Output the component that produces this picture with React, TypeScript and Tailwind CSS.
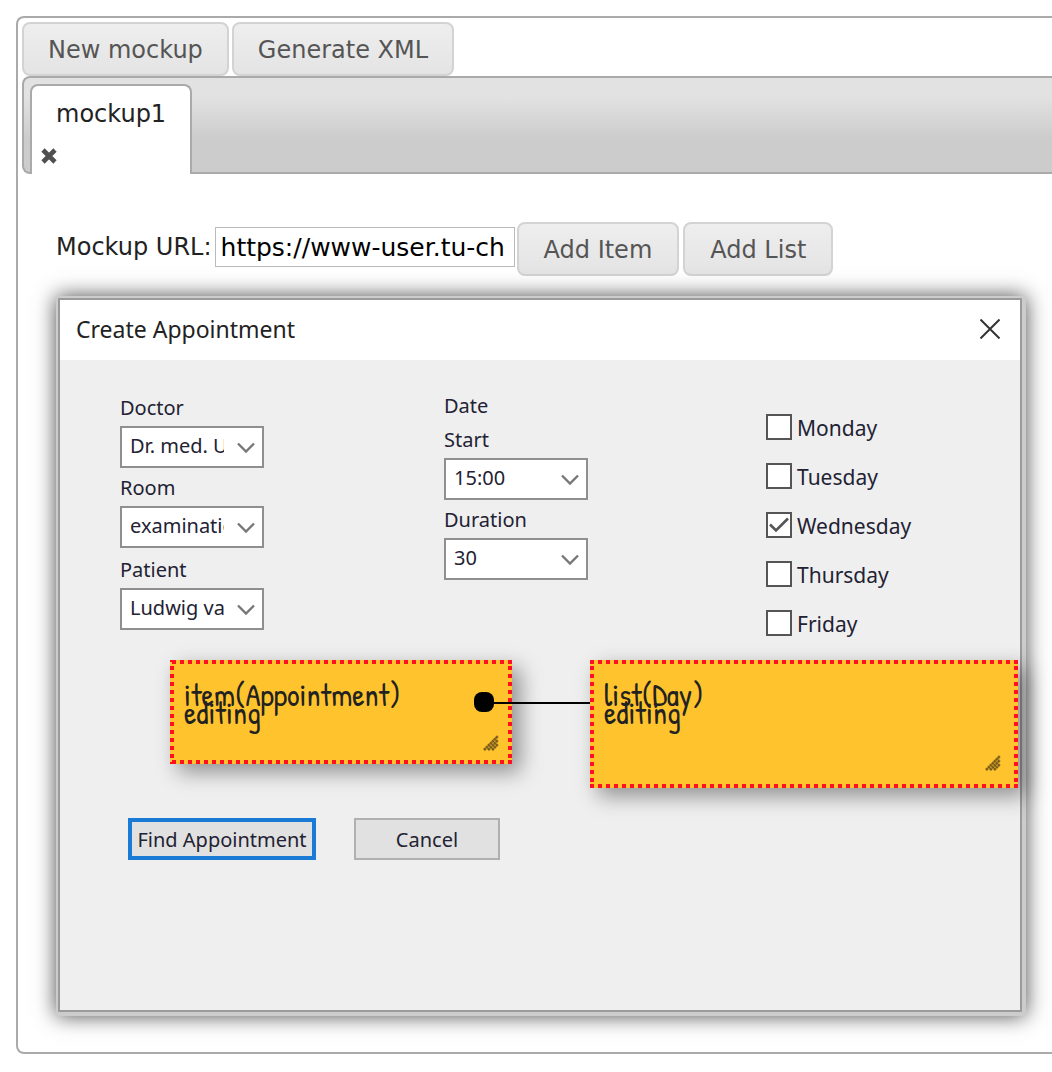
import { useState, type ReactNode } from "react";

function UiButton({ children, wide }: { children: ReactNode; wide?: boolean }) {
  return (
    <button
      type="button"
      className={`h-[54px] shrink-0 rounded-lg border-2 border-[#d3d3d3] bg-linear-to-b from-[#eeeeee] to-[#e4e4e4] pt-[2px] text-2xl text-[#555555] ${wide ? "px-[25px]" : "px-6"}`}
    >
      {children}
    </button>
  );
}

function SelectField({ id, label, options, tall }: { id: string; label: string; options: string[]; tall?: boolean }) {
  return (
    <div>
      <label htmlFor={id} className={tall ? "flex h-10 items-center pt-1" : "flex h-[38px] items-center pt-[2px]"}>
        {label}
      </label>
      <div className="relative w-36">
        <select
          id={id}
          className="block h-[42px] w-full appearance-none border-2 border-[#8f8f8f] bg-white pr-[38px] pb-[2px] pl-2"
        >
          {options.map((o) => (
            <option key={o}>{o}</option>
          ))}
        </select>
        <svg
          className="pointer-events-none absolute top-4 right-2 h-3 w-5"
          viewBox="0 0 20 12"
          fill="none"
          stroke="#777777"
          strokeWidth="2.4"
        >
          <path d="M2 1.5 10 9.5 18 1.5" />
        </svg>
      </div>
    </div>
  );
}

function DayBox({ day, initial }: { day: string; initial: boolean }) {
  const [checked, setChecked] = useState(initial);
  return (
    <label className="flex h-[26px] items-center gap-[5px] text-[21px]">
      <span className="relative size-[26px] shrink-0">
        <input
          type="checkbox"
          checked={checked}
          onChange={(e) => setChecked(e.target.checked)}
          className="block size-[26px] appearance-none border-2 border-[#555555] bg-white"
        />
        {checked && (
          <svg
            className="pointer-events-none absolute inset-0"
            viewBox="0 0 26 26"
            fill="none"
            stroke="#555555"
            strokeWidth="2.6"
          >
            <path d="M4 12.5 10 18.5 22 6.5" />
          </svg>
        )}
      </span>
      <span className="pt-[2px]">{day}</span>
    </label>
  );
}

function Grip() {
  return (
    <svg className="size-4" viewBox="0 0 16 16" stroke="#7a5c1c" strokeWidth="2.6" strokeDasharray="2.4 0.4">
      <path d="M1 15 15 1M5 15 15 5M9 15 15 9" />
    </svg>
  );
}

const noteClass =
  "absolute top-[364px] bg-[#ffc42d] p-[14px] font-['Patrick_Hand','Liberation_Sans_Narrow',Roboto,sans-serif] text-[31px] leading-[18px] text-[#222222] shadow-[8px_8px_20px_rgba(0,0,0,0.4)] [background-image:linear-gradient(270deg,#ff1020_50%,transparent_50%),linear-gradient(270deg,#ff1020_50%,transparent_50%),linear-gradient(180deg,#ff1020_50%,transparent_50%),linear-gradient(180deg,#ff1020_50%,transparent_50%)] [background-position:right_top,right_bottom,0_6px,100%_6px] [background-repeat:repeat-x,repeat-x,repeat-y,repeat-y] [background-size:8px_4px,8px_4px,4px_8px,4px_8px]";

const days = ["Monday", "Tuesday", "Wednesday", "Thursday", "Friday"];

export default function App() {
  const [url, setUrl] = useState("https://www-user.tu-ch");
  return (
    <div className="overflow-x-hidden bg-white pt-4 pb-[18px] pl-4 font-['DejaVu_Sans',Verdana,sans-serif] text-2xl text-[#222222]">
      <main className="rounded-l-lg border-2 border-r-0 border-[#aaaaaa] pt-1 pb-9 pl-1">
        <div className="flex gap-[3px]">
          <UiButton>New mockup</UiButton>
          <UiButton>Generate XML</UiButton>
        </div>

        <div className="flex h-[98px] rounded-l-lg border-2 border-r-0 border-[#aaaaaa] bg-linear-to-b from-[#e2e2e2] from-20% via-[#cccccc] via-65% to-[#cccccc] pt-[6px] pl-[6px]">
          <div className="-mb-[2px] flex w-[162px] flex-col items-start rounded-t-lg border-2 border-b-0 border-[#aaaaaa] bg-white">
            <a href="#mockup1" className="px-6 pt-3 leading-8">
              mockup1
            </a>
            <button type="button" aria-label="Remove tab" className="mt-[18px] ml-[9px]">
              <svg className="size-4" viewBox="0 0 16 16" stroke="#505050" strokeWidth="4.6">
                <path d="M2 2 14 14M14 2 2 14" />
              </svg>
            </button>
          </div>
        </div>

        <section id="mockup1" className="pt-12 pr-[26px] pl-[34px]">
          <div className="flex items-center">
            <label htmlFor="url" className="mr-[3px] shrink-0 pb-1">
              Mockup URL:
            </label>
            <input
              id="url"
              type="text"
              value={url}
              onChange={(e) => setUrl(e.target.value)}
              className="mr-[2px] mb-1 h-10 w-[300px] border border-[#bbbbbb] bg-white px-[5px] text-[25px] text-black"
            />
            <div className="flex gap-1">
              <UiButton wide>Add Item</UiButton>
              <UiButton wide>Add List</UiButton>
            </div>
          </div>

          <div className="relative mt-5 max-w-[970px] bg-[#cccccc] pt-[2px] pr-1 pb-1 pl-[2px] font-['Noto_Sans','Open_Sans',sans-serif] text-xl leading-7 text-[#222233] shadow-[0_0_20px_rgba(0,0,0,0.7)]">
            <div className="border-2 border-[#9b9b9b] bg-[#efefef] pb-[150px]">
              <header className="flex h-[60px] items-center justify-between bg-white pr-5 pb-[2px] pl-4">
                <h1 className="text-[23px] text-[#222222]">Create Appointment</h1>
                <button type="button" aria-label="Close">
                  <svg className="size-5" viewBox="0 0 20 20" stroke="#333333" strokeWidth="2">
                    <path d="M0.5 0.5 19.5 19.5M19.5 0.5 0.5 19.5" />
                  </svg>
                </button>
              </header>

              <div className="grid grid-cols-[324px_322px_1fr] pt-7 pl-[60px]">
                <div>
                  <SelectField id="doctor" label="Doctor" options={["Dr. med. Ulrich"]} />
                  <SelectField id="room" label="Room" options={["examination"]} />
                  <SelectField id="patient" label="Patient" options={["Ludwig van Beethoven"]} tall />
                </div>
                <div>
                  <p className="flex h-8 items-center pt-1">Date</p>
                  <SelectField id="start" label="Start" options={["15:00"]} />
                  <SelectField id="duration" label="Duration" options={["30"]} />
                </div>
                <div className="flex flex-col gap-[23px] pt-[26px]">
                  {days.map((d) => (
                    <DayBox key={d} day={d} initial={d === "Wednesday"} />
                  ))}
                </div>
              </div>

              <div className="mt-[182px] flex gap-[38px] pl-[68px]">
                <button type="button" className="h-[42px] w-[188px] border-4 border-[#1a7bd7] bg-[#e1e1e1] pt-[2px]">
                  Find Appointment
                </button>
                <button type="button" className="h-[42px] w-[146px] border-2 border-[#b0b0b0] bg-[#e1e1e1] pt-[2px]">
                  Cancel
                </button>
              </div>
            </div>

            <div className={`${noteClass} left-[114px] h-[104px] w-[342px]`}>
              <p className="pt-3">item(Appointment)</p>
              <p>editing</p>
              <span className="absolute right-[13px] bottom-[13px]">
                <Grip />
              </span>
            </div>
            <div className="absolute top-[406px] left-[428px] h-[2px] w-[106px] bg-black" />
            <div className="absolute top-[396px] left-[418px] size-5 rounded-lg bg-black" />
            <div className={`${noteClass} left-[534px] h-32 w-[428px]`}>
              <p className="pt-3">list(Day)</p>
              <p>editing</p>
              <span className="absolute right-[17px] bottom-[17px]">
                <Grip />
              </span>
            </div>
          </div>
        </section>
      </main>
    </div>
  );
}
